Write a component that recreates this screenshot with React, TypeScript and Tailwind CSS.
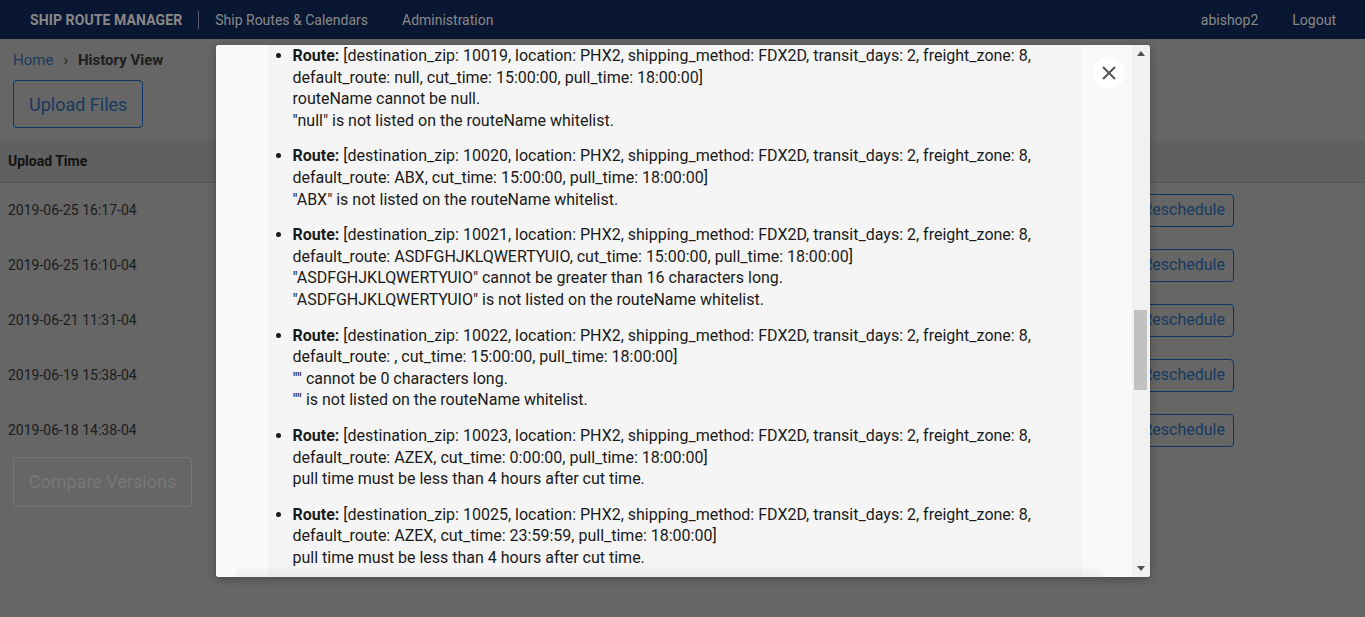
const rows = [
  '2019-06-25 16:17-04',
  '2019-06-25 16:10-04',
  '2019-06-21 11:31-04',
  '2019-06-19 15:38-04',
  '2019-06-18 14:38-04',
];

const errors = [
  {
    route:
      '[destination_zip: 10019, location: PHX2, shipping_method: FDX2D, transit_days: 2, freight_zone: 8, default_route: null, cut_time: 15:00:00, pull_time: 18:00:00]',
    messages: ['routeName cannot be null.', '"null" is not listed on the routeName whitelist.'],
  },
  {
    route:
      '[destination_zip: 10020, location: PHX2, shipping_method: FDX2D, transit_days: 2, freight_zone: 8, default_route: ABX, cut_time: 15:00:00, pull_time: 18:00:00]',
    messages: ['"ABX" is not listed on the routeName whitelist.'],
  },
  {
    route:
      '[destination_zip: 10021, location: PHX2, shipping_method: FDX2D, transit_days: 2, freight_zone: 8, default_route: ASDFGHJKLQWERTYUIO, cut_time: 15:00:00, pull_time: 18:00:00]',
    messages: [
      '"ASDFGHJKLQWERTYUIO" cannot be greater than 16 characters long.',
      '"ASDFGHJKLQWERTYUIO" is not listed on the routeName whitelist.',
    ],
  },
  {
    route:
      '[destination_zip: 10022, location: PHX2, shipping_method: FDX2D, transit_days: 2, freight_zone: 8, default_route: , cut_time: 15:00:00, pull_time: 18:00:00]',
    messages: ['"" cannot be 0 characters long.', '"" is not listed on the routeName whitelist.'],
  },
  {
    route:
      '[destination_zip: 10023, location: PHX2, shipping_method: FDX2D, transit_days: 2, freight_zone: 8, default_route: AZEX, cut_time: 0:00:00, pull_time: 18:00:00]',
    messages: ['pull time must be less than 4 hours after cut time.'],
  },
  {
    route:
      '[destination_zip: 10025, location: PHX2, shipping_method: FDX2D, transit_days: 2, freight_zone: 8, default_route: AZEX, cut_time: 23:59:59, pull_time: 18:00:00]',
    messages: ['pull time must be less than 4 hours after cut time.'],
  },
];

function Header() {
  return (
    <header className="h-[39px] bg-[#0a1733] flex items-center pt-[1px] px-[30px] text-[14px] text-[#898989]">
      <span className="font-bold tracking-[0.1px]">SHIP ROUTE MANAGER</span>
      <span className="mx-[16px] h-[18px] w-px bg-[#5c5f66]" />
      <span>Ship Routes &amp; Calendars</span>
      <span className="ml-[34px]">Administration</span>
      <span className="ml-auto">abishop2</span>
      <span className="ml-[34px] mr-[-1px]">Logout</span>
    </header>
  );
}

function Background() {
  return (
    <main className="bg-[#666666] min-h-[578px]">
      <nav className="flex items-center h-[41px] pt-[2px] px-[13px] text-[15px]">
        <span className="text-[#1b3b5e]">Home</span>
        <span className="mx-[10px] text-[#222]">›</span>
        <span className="font-bold text-[#1d1d1d]">History View</span>
      </nav>
      <div className="px-[13px]">
        <button className="h-[48px] px-[15px] rounded-[4px] border border-[#0e3660] text-[18px] text-[#173a5e]">
          Upload Files
        </button>
      </div>
      <div className="mt-[13px]">
        <div className="h-[42px] bg-[#606060] border-b border-[#545454] flex items-center px-[8px]">
          <span className="text-[14px] font-bold text-[#121212]">Upload Time</span>
        </div>
        {rows.map((r) => (
          <div key={r} className="h-[55px] flex items-center px-[8px]">
            <span className="text-[14px] text-[#1c1c1c]">{r}</span>
            <button className="ml-auto mr-[123px] h-[33px] w-[104px] rounded-[4px] border border-[#0e3660] flex items-center justify-end pr-[8px] pb-[1px] text-[16px] text-[#173a5e]">
              Reschedule
            </button>
          </div>
        ))}
      </div>
      <div className="px-[13px] -mt-[1px]">
        <button className="h-[50px] w-[179px] rounded-[4px] border border-[#767676] pb-[2px] text-[18px] text-[#787878]">
          Compare Versions
        </button>
      </div>
    </main>
  );
}

function Modal() {
  return (
    <div className="fixed inset-0 pt-[5px] flex items-center justify-center">
      <div className="w-[934px] h-[532px] bg-[#fafafa] rounded-[3px] overflow-hidden flex shadow-[0_2px_8px_rgba(0,0,0,0.3)]">
        <div className="relative flex-1 flex overflow-hidden">
          <div className="w-[52px] bg-[#fafafa]" />
          <div className="w-[814px] bg-[#f5f5f5] pl-[25px] pr-[6px]">
            <ul className="list-disc text-[16px] leading-[21.6px] text-[#1a1a1a]">
              {errors.map((e, i) => (
                <li key={i} className="mb-[14px]">
                  <span className="font-bold">Route:</span> {e.route}
                  {e.messages.map((m) => (
                    <span key={m} className="block">
                      {m}
                    </span>
                  ))}
                </li>
              ))}
            </ul>
          </div>
          <div className="flex-1 bg-[#f9f9f9]" />
          <button className="absolute top-[12px] right-[7px] w-[32px] h-[32px] rounded-full bg-white flex items-center justify-center text-[#555]">
            <svg width="16" height="16" viewBox="0 0 16 16" fill="none" stroke="currentColor" strokeWidth="2">
              <path d="M2 2l12 12M14 2L2 14" />
            </svg>
          </button>
          <div className="absolute bottom-0 left-[20px] right-[30px] h-[10px] bg-gradient-to-b from-transparent to-black/[0.07] blur-[2px]" />
        </div>
        <div className="relative w-[18px] bg-[#f1f1f1]">
          <svg className="absolute top-[6px] left-[5px]" width="8" height="5" viewBox="0 0 8 5">
            <path d="M0 5L4 0L8 5Z" fill="#505050" />
          </svg>
          <div className="absolute top-[265px] left-[2px] w-[13px] h-[80px] bg-[#c1c1c1]" />
          <svg className="absolute bottom-[6px] left-[5px]" width="8" height="5" viewBox="0 0 8 5">
            <path d="M0 0L8 0L4 5Z" fill="#505050" />
          </svg>
        </div>
      </div>
    </div>
  );
}

export default function App() {
  return (
    <div className="relative h-[617px] overflow-hidden font-['Roboto',sans-serif]">
      <Header />
      <Background />
      <Modal />
    </div>
  );
}
